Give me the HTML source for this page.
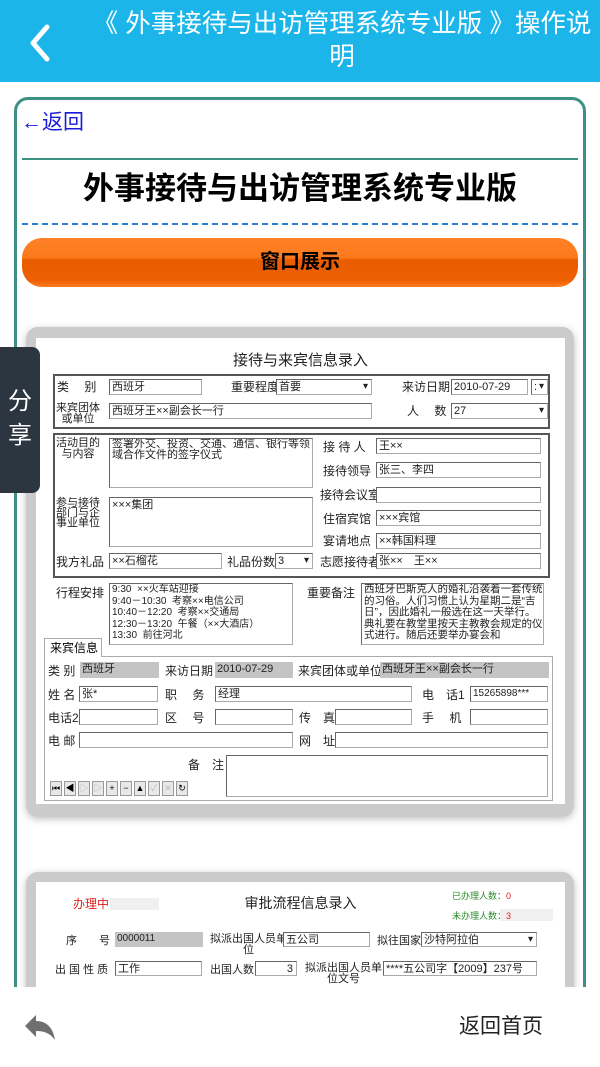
<!DOCTYPE html>
<html><head><meta charset="utf-8">
<style>
*{margin:0;padding:0;box-sizing:border-box}
body{width:600px;height:1067px;overflow:hidden;position:relative;background:#fff;font-family:"Liberation Sans","Noto Sans CJK SC",sans-serif}
.a{position:absolute}
.l{position:absolute;font-size:12px;color:#222;white-space:nowrap;line-height:14px}
.i{position:absolute;border:1px solid #aaa;border-top-color:#666;border-left-color:#666;background:#fff;font-size:11px;line-height:14px;padding-left:2px;color:#222;white-space:nowrap;overflow:hidden}
.g{position:absolute;background:#c4c4c4;font-size:11px;line-height:14px;padding-left:2px;color:#222;white-space:nowrap}
.box{position:absolute;border:2px solid #555}
.dd:after{content:"▾";position:absolute;right:3px;top:0;font-size:10px}
.nb{display:inline-block;width:12px;height:15px;border:1px solid #999;background:#e8e8e8;margin-right:2px;font-size:9px;text-align:center;line-height:13px}
</style></head><body>
<!-- header -->
<div class="a" style="left:0;top:0;width:600px;height:82px;background:#1bb5ea"></div>
<svg class="a" style="left:28px;top:24px" width="24" height="38"><path d="M19 3 L5 19 L19 35" stroke="#fff" stroke-width="5" fill="none" stroke-linecap="round" stroke-linejoin="round"/></svg>
<div class="a" style="left:86px;top:8px;width:512px;text-align:center;color:#fff;font-size:25.5px;line-height:33px">《 外事接待与出访管理系统专业版 》操作说明</div>

<!-- card -->
<div class="a" style="left:14px;top:97px;width:572px;height:960px;border:3px solid #3d9182;border-radius:14px"></div>
<div class="a" style="left:21px;top:109px;color:#1a1adb;font-size:21px;line-height:28px">←返回</div>
<div class="a" style="left:22px;top:158px;width:556px;height:2px;background:#3d9182"></div>
<div class="a" style="left:22px;top:169px;width:556px;text-align:center;font-weight:bold;font-size:31px;line-height:40px;color:#000">外事接待与出访管理系统专业版</div>
<div class="a" style="left:22px;top:223px;width:556px;border-top:2px dashed #2a7fd8"></div>
<div class="a" style="left:22px;top:238px;width:556px;height:49px;border-radius:20px;background:linear-gradient(#ff8026 0%,#fb7a1c 40%,#e95c00 45%,#ec5f02 85%,#ff7a1e 100%);text-align:center;font-weight:bold;font-size:20px;line-height:49px;color:#000">窗口展示</div>

<!-- screenshot 1 -->
<div class="a" style="left:26px;top:327px;width:548px;height:490px;background:#cbcbcb;border-radius:12px;box-shadow:0 2px 8px rgba(0,0,0,.25)"></div>
<div class="a" style="left:36px;top:338px;width:529px;height:466px;background:#fff"></div>
<div class="a" style="left:36px;top:349px;width:529px;text-align:center;font-size:15px;color:#222">接待与来宾信息录入</div>
<div class="box" style="left:53px;top:374px;width:497px;height:55px"></div>
<div class="l" style="left:57px;top:380px">类　 别</div><div class="i" style="left:109px;top:379px;width:93px;height:16px">西班牙</div>
<div class="l" style="left:231px;top:380px">重要程度</div><div class="i dd" style="left:276px;top:379px;width:96px;height:16px">首要</div>
<div class="l" style="left:402px;top:380px">来访日期</div><div class="i" style="left:451px;top:379px;width:77px;height:16px">2010-07-29</div><div class="i dd" style="left:531px;top:379px;width:17px;height:16px">:</div>
<div class="l" style="left:56px;top:403px;font-size:11px;line-height:11px;text-align:center">来宾团体<br>或单位</div><div class="i" style="left:109px;top:403px;width:263px;height:16px">西班牙王××副会长一行</div>
<div class="l" style="left:407px;top:404px">人　 数</div><div class="i dd" style="left:451px;top:403px;width:97px;height:16px">27</div>

<div class="box" style="left:53px;top:433px;width:497px;height:145px"></div>
<div class="l" style="left:56px;top:438px;font-size:11px;line-height:11px;text-align:center">活动目的<br>与内容</div>
<div class="i" style="left:109px;top:438px;width:204px;height:50px;white-space:normal;line-height:11px">签署外交、投资、交通、通信、银行等领域合作文件的签字仪式</div>
<div class="l" style="left:56px;top:498px;font-size:11px;line-height:10px">参与接待<br>部门与企<br>事业单位</div>
<div class="i" style="left:109px;top:497px;width:204px;height:50px">×××集团</div>
<div class="l" style="left:56px;top:555px">我方礼品</div><div class="i" style="left:109px;top:553px;width:113px;height:16px">××石榴花</div>
<div class="l" style="left:227px;top:555px">礼品份数</div><div class="i dd" style="left:275px;top:553px;width:38px;height:16px">3</div>
<div class="l" style="left:323px;top:440px">接 待 人</div><div class="i" style="left:376px;top:438px;width:165px;height:16px">王××</div>
<div class="l" style="left:323px;top:464px">接待领导</div><div class="i" style="left:376px;top:462px;width:165px;height:16px">张三、李四</div>
<div class="l" style="left:320px;top:488px">接待会议室</div><div class="i" style="left:376px;top:487px;width:165px;height:16px"></div>
<div class="l" style="left:323px;top:512px">住宿宾馆</div><div class="i" style="left:376px;top:510px;width:165px;height:16px">×××宾馆</div>
<div class="l" style="left:323px;top:534px">宴请地点</div><div class="i" style="left:376px;top:533px;width:165px;height:16px">××韩国料理</div>
<div class="l" style="left:320px;top:555px">志愿接待者</div><div class="i" style="left:376px;top:553px;width:165px;height:16px">张××　王××</div>

<div class="l" style="left:56px;top:586px">行程安排</div>
<div class="i" style="left:109px;top:583px;width:184px;height:62px;font-size:10px;line-height:11.5px;white-space:pre">9:30  ××火车站迎接
9:40－10:30  考察××电信公司
10:40－12:20  考察××交通局
12:30－13:20  午餐（××大酒店）
13:30  前往河北</div>
<div class="l" style="left:307px;top:586px">重要备注</div>
<div class="i" style="left:361px;top:583px;width:183px;height:62px;font-size:10.5px;line-height:11.5px;white-space:normal">西班牙巴斯克人的婚礼沿袭着一套传统的习俗。人们习惯上认为星期二是“吉日”，因此婚礼一般选在这一天举行。典礼要在教堂里按天主教教会规定的仪式进行。随后还要举办宴会和</div>

<div class="a" style="left:44px;top:638px;width:58px;height:19px;border:1px solid #aaa;border-bottom:none;background:#fff;font-size:12px;line-height:18px;padding-left:5px;z-index:2">来宾信息</div>
<div class="a" style="left:44px;top:656px;width:509px;height:145px;border:1px solid #aaa"></div>
<div class="l" style="left:48px;top:664px">类 别</div><div class="g" style="left:80px;top:662px;width:79px;height:16px">西班牙</div>
<div class="l" style="left:165px;top:664px">来访日期</div><div class="g" style="left:215px;top:662px;width:78px;height:16px">2010-07-29</div>
<div class="l" style="left:298px;top:664px">来宾团体或单位</div><div class="g" style="left:380px;top:662px;width:169px;height:16px">西班牙王××副会长一行</div>
<div class="l" style="left:48px;top:688px">姓 名</div><div class="i" style="left:79px;top:686px;width:79px;height:16px">张*</div>
<div class="l" style="left:165px;top:688px">职　 务</div><div class="i" style="left:215px;top:686px;width:197px;height:16px">经理</div>
<div class="l" style="left:422px;top:688px">电　话1</div><div class="i" style="left:470px;top:686px;width:78px;height:16px;font-size:10px">15265898***</div>
<div class="l" style="left:48px;top:711px">电话2</div><div class="i" style="left:79px;top:709px;width:79px;height:16px"></div>
<div class="l" style="left:165px;top:711px">区　 号</div><div class="i" style="left:215px;top:709px;width:78px;height:16px"></div>
<div class="l" style="left:299px;top:711px">传　真</div><div class="i" style="left:335px;top:709px;width:77px;height:16px"></div>
<div class="l" style="left:422px;top:711px">手　 机</div><div class="i" style="left:470px;top:709px;width:78px;height:16px"></div>
<div class="l" style="left:48px;top:734px">电 邮</div><div class="i" style="left:79px;top:732px;width:214px;height:16px"></div>
<div class="l" style="left:299px;top:734px">网　址</div><div class="i" style="left:335px;top:732px;width:213px;height:16px"></div>
<div class="l" style="left:188px;top:758px">备　注</div><div class="i" style="left:226px;top:755px;width:322px;height:42px"></div>
<div class="a" style="left:50px;top:781px;white-space:nowrap;font-size:0"><span class="nb">⏮</span><span class="nb">◀</span><span class="nb" style="color:#bbb">▷</span><span class="nb" style="color:#bbb">▷</span><span class="nb">+</span><span class="nb">−</span><span class="nb">▲</span><span class="nb" style="color:#bbb">✓</span><span class="nb" style="color:#bbb">✕</span><span class="nb">↻</span></div>

<!-- share tab -->
<div class="a" style="left:0;top:347px;width:40px;height:146px;background:#2b3640;border-radius:0 8px 8px 0;color:#fff;font-size:24px;line-height:34px;text-align:center;padding-top:38px">分<br>享</div>

<!-- screenshot 2 -->
<div class="a" style="left:26px;top:872px;width:548px;height:130px;background:#cbcbcb;border-radius:12px;box-shadow:0 2px 8px rgba(0,0,0,.25)"></div>
<div class="a" style="left:36px;top:882px;width:529px;height:120px;background:#fff"></div>
<div class="a" style="left:110px;top:898px;width:49px;height:12px;background:#f0f0f0"></div>
<div class="l" style="left:73px;top:897px;color:#e02020">办理中</div>
<div class="a" style="left:36px;top:893px;width:529px;text-align:center;font-size:14px;color:#222">审批流程信息录入</div>
<div class="l" style="left:452px;top:889px;font-size:9px;color:#2a8a2a">已办理人数：<span style="color:#e02020">0</span></div>
<div class="a" style="left:500px;top:909px;width:53px;height:12px;background:#f0f0f0"></div>
<div class="l" style="left:452px;top:909px;font-size:9px;color:#2a8a2a">未办理人数：<span style="color:#e02020">3</span></div>
<div class="l" style="left:66px;top:934px;font-size:11px">序　　号</div><div class="g" style="left:115px;top:932px;width:88px;height:15px;font-size:10px">0000011</div>
<div class="l" style="left:210px;top:934px;font-size:11px;line-height:11px;text-align:center">拟派出国人员单<br>位</div><div class="i" style="left:283px;top:932px;width:87px;height:15px">五公司</div>
<div class="l" style="left:377px;top:934px;font-size:11px">拟往国家</div><div class="i dd" style="left:421px;top:932px;width:116px;height:15px">沙特阿拉伯</div>
<div class="l" style="left:55px;top:963px;font-size:11px">出 国 性 质</div><div class="i" style="left:115px;top:961px;width:87px;height:15px">工作</div>
<div class="l" style="left:210px;top:963px;font-size:11px">出国人数</div><div class="i" style="left:255px;top:961px;width:42px;height:15px;text-align:right;padding-right:3px">3</div>
<div class="l" style="left:305px;top:963px;font-size:11px;line-height:11px;text-align:center">拟派出国人员单<br>位文号</div><div class="i" style="left:383px;top:961px;width:154px;height:15px">****五公司字【2009】237号</div>

<!-- footer -->
<div class="a" style="left:0;top:987px;width:600px;height:80px;background:#fff"></div>
<svg class="a" style="left:22px;top:1012px" width="36" height="32"><path d="M3 14 L14 3 L14 9 C24 9 31 15 33 28 C28 21 22 19 14 19 L14 25 Z" fill="#6f6f6f"/></svg>
<div class="a" style="left:459px;top:1012px;font-size:21px;line-height:30px;color:#222">返回首页</div>
</body></html>
